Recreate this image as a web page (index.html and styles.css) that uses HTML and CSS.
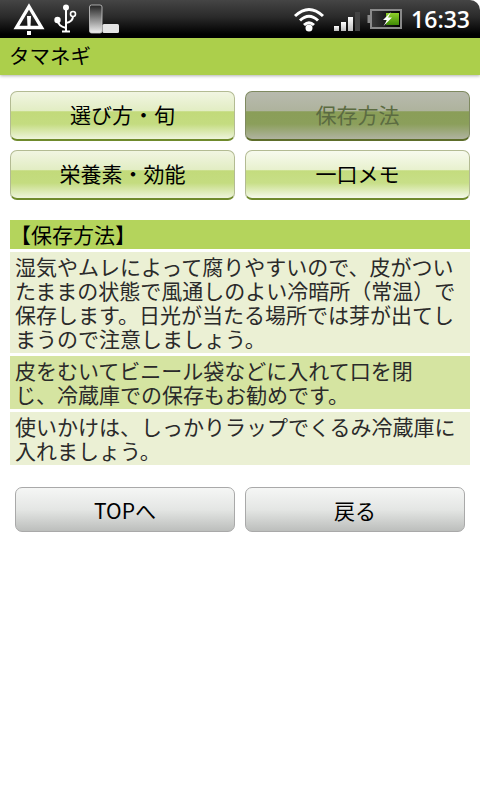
FILE: index.html
```html
<!DOCTYPE html>
<html lang="ja">
  <head>
    <meta charset="UTF-8" />
    <meta name="viewport" content="width=device-width, initial-scale=1.0" />
    <title>タマネギ</title>
    <link rel="stylesheet" href="styles.css">
  </head>
  <body>
    <div class="status-bar">
      <div class="status-left">
        <svg width="32" height="34" viewBox="0 0 32 34">
          <path d="M16 4.500 L28.500 25.500 H3.500 Z" fill="none" stroke="#fff" stroke-width="3.400"/>
          <path d="M14 14 H18 L17.500 25 H14.500 Z" fill="#fff"/>
          <rect x="14" y="29" width="4" height="4" fill="#fff"/>
        </svg>
        <svg class="icon-usb" width="24" height="32" viewBox="0 0 24 32">
          <circle cx="13" cy="4.500" r="3" fill="#fff"/>
          <path d="M13 5 V28 M9 28.500 H17" stroke="#fff" stroke-width="2" fill="none"/>
          <circle cx="4.500" cy="17" r="3.200" fill="#fff"/>
          <path d="M4.500 17 Q5 23 13 25 M13 20 Q20 19 20 13" stroke="#fff" stroke-width="2" fill="none"/>
          <circle cx="20" cy="11" r="2.500" fill="none" stroke="#fff" stroke-width="1.600"/>
        </svg>
        <svg class="icon-sd" width="31" height="30" viewBox="0 0 31 30">
          <defs>
            <linearGradient id="sd-fill" x1="0" y1="0" x2="0" y2="1">
              <stop offset="0" stop-color="#222"/>
              <stop offset="1" stop-color="#f0f0f0"/>
            </linearGradient>
          </defs>
          <rect x="0.500" y="1" width="12.500" height="28" rx="2" fill="url(#sd-fill)" stroke="#ccc" stroke-width="0.800"/>
          <rect x="13.500" y="20" width="16.500" height="9" rx="1.500" fill="#e4e4e4"/>
        </svg>
      </div>
      <div class="status-right">
        <svg width="32" height="26" viewBox="0 0 32 26">
          <path d="M2 10 Q16 -3 30 10 M7 14.500 Q16 6 25 14.500 M11 19 Q16 14.500 21 19" stroke="#fff" stroke-width="3" fill="none"/>
          <circle cx="16" cy="22" r="3.500" fill="#fff"/>
        </svg>
        <div class="signal">
          <span class="bar bar-1"></span>
          <span class="bar bar-2"></span>
          <span class="bar bar-3"></span>
          <span class="bar bar-4"></span>
        </div>
        <svg class="icon-battery" width="35" height="20" viewBox="0 0 35 20">
          <defs>
            <linearGradient id="charge" x1="0" y1="0" x2="0" y2="1">
              <stop offset="0" stop-color="#8ed02a"/>
              <stop offset="1" stop-color="#3f8a06"/>
            </linearGradient>
            <linearGradient id="empty" x1="0" y1="0" x2="1" y2="0">
              <stop offset="0" stop-color="#3a3a3a"/>
              <stop offset="1" stop-color="#000"/>
            </linearGradient>
          </defs>
          <rect x="0.500" y="6" width="3.500" height="8" fill="#8a8a8a"/>
          <rect x="4" y="1" width="30" height="18" fill="url(#empty)" stroke="#8a8a8a" stroke-width="2"/>
          <rect x="19" y="4" width="13" height="12" fill="url(#charge)"/>
          <path d="M24 3 L16 11 H20 L16.500 17 L25 8.500 H21 Z" fill="#fff"/>
        </svg>
        <span class="clock">16:33</span>
      </div>
    </div>

    <div class="title-bar">タマネギ</div>

    <div class="content">
      <div class="tab-grid">
        <button class="tab">選び方・旬</button>
        <button class="tab tab-active">保存方法</button>
        <button class="tab">栄養素・効能</button>
        <button class="tab tab-light">一口メモ</button>
      </div>

      <h2 class="section-head">【保存方法】</h2>
      <div class="notes">
        <p class="note">湿気やムレによって腐りやすいので、皮がつい<br>たままの状態で風通しのよい冷暗所（常温）で<br>保存します。日光が当たる場所では芽が出てし<br>まうので注意しましょう。</p>
        <p class="note note-alt">皮をむいてビニール袋などに入れて口を閉<br>じ、冷蔵庫での保存もお勧めです。</p>
        <p class="note">使いかけは、しっかりラップでくるみ冷蔵庫に<br>入れましょう。</p>
      </div>

      <div class="nav-row">
        <button class="nav-btn">TOPへ</button>
        <button class="nav-btn">戻る</button>
      </div>
    </div>
  </body>
</html>
```

FILE: styles.css
```css
* {
  padding: 0;
  margin: 0;
  box-sizing: border-box;
}
html {
  font-size: 16px;
}
body {
  width: 480px;
  height: 800px;
  overflow: hidden;
  background: #fff;
  color: #000;
  font-family: "Noto Sans CJK JP", "Noto Sans", sans-serif;
}
.status-bar {
  height: 38px;
  display: flex;
  justify-content: space-between;
  align-items: center;
  background: linear-gradient(#454545, #2a2a2a 45%, #000 90%);
  border-radius: 0 10px 0 0;
}
.status-left {
  display: flex;
  align-items: center;
  padding-left: 13px;
}
.icon-usb {
  margin-left: 8px;
}
.icon-sd {
  margin-left: 12px;
}
.status-right {
  display: flex;
  align-items: center;
  padding-right: 10px;
}
.signal {
  width: 26px;
  height: 20px;
  margin-left: 9px;
  margin-top: 4px;
  display: flex;
  align-items: flex-end;
  gap: 2px;
}
.bar {
  width: 5px;
  background: linear-gradient(#fff, #bbb);
}
.bar-1 {
  height: 5px;
}
.bar-2 {
  height: 9px;
}
.bar-3 {
  height: 14px;
}
.bar-4 {
  height: 19px;
  background: #444;
}
.icon-battery {
  margin-left: 7px;
}
.clock {
  margin-left: 9px;
  color: #fff;
  font-family: "Open Sans", "Noto Sans", sans-serif;
  font-size: 23px;
  font-weight: 600;
  line-height: 38px;
}
.title-bar {
  height: 37px;
  padding-left: 9px;
  background: #accf4b;
  box-shadow: 0 1px 3px rgba(0, 0, 0, 0.3);
  font-size: 20.500px;
  line-height: 35px;
}
.content {
  padding: 16px 10px 0;
}
.tab-grid {
  display: grid;
  grid-template-columns: 225px 225px;
  grid-auto-rows: 50px;
  column-gap: 10px;
  row-gap: 9px;
}
.tab {
  padding-bottom: 3px;
  border: 1px solid #b3bb93;
  border-bottom: 2px solid #6f8a2c;
  border-radius: 7px;
  background: linear-gradient(#f1f5e2, #e2edc3 40%, #c2da7a 42%, #c4dc80 68%, #eef4dc 100%);
  color: #000;
  font-family: inherit;
  font-size: 21px;
}
.tab-light {
  background: linear-gradient(#f7faee, #e8f1ce 40%, #c4dc7e 42%, #c8df88 68%, #f5f9ea 100%);
}
.tab-active {
  border-color: #7f8a60;
  border-bottom-color: #5d6d2a;
  background: linear-gradient(#b8baae, #aeb39d 40%, #8a9e58 42%, #8b9f5b 68%, #b0b3a0 100%);
  color: #5b6b41;
}
.section-head {
  height: 29px;
  margin-top: 20px;
  background: #b4d45c;
  font-size: 21px;
  font-weight: normal;
  line-height: 29px;
}
.notes {
  margin-top: 3px;
  display: flex;
  flex-direction: column;
  gap: 3px;
}
.note {
  padding: 2px 5px 3px;
  background: #ebf0d4;
  color: #2a2a2a;
  font-size: 21px;
  line-height: 24px;
  white-space: nowrap;
}
.note-alt {
  background: #d5e4a1;
}
.nav-row {
  margin-top: 22px;
  padding: 0 5px;
  display: flex;
  gap: 10px;
}
.nav-btn {
  width: 220px;
  height: 45px;
  border: 1px solid #a9a9a9;
  border-radius: 7px;
  background: linear-gradient(#f5f6f5, #e4e6e4 50%, #bcbebc);
  color: #000;
  font-family: inherit;
  font-size: 21px;
}
```
